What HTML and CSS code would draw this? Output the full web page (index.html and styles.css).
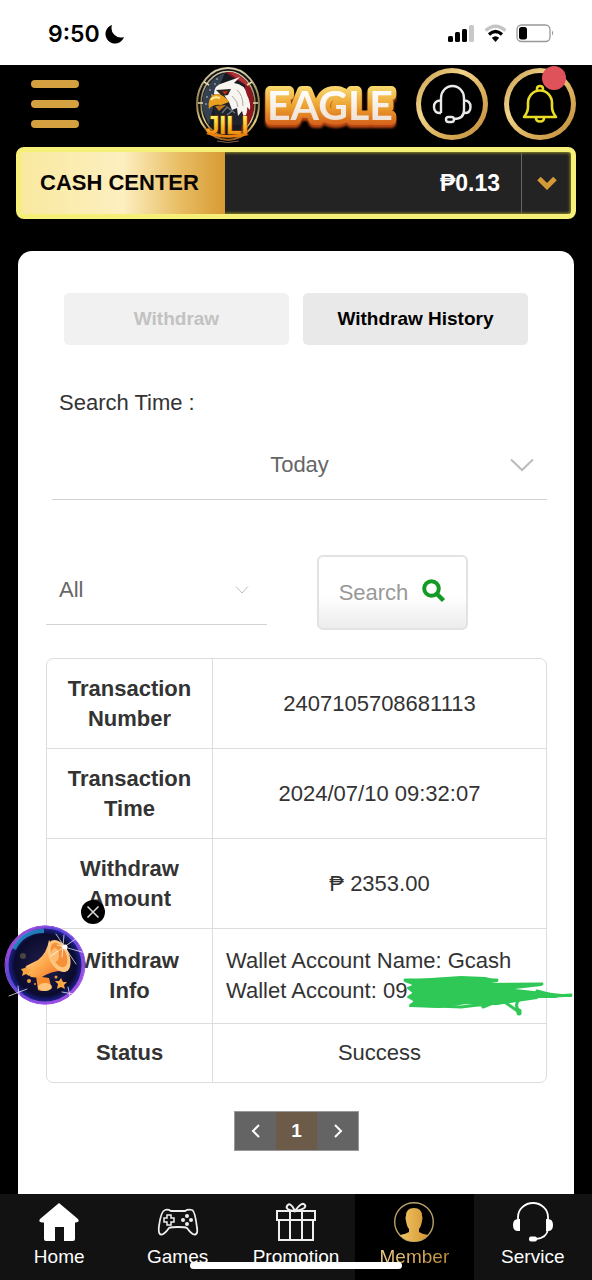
FILE: index.html
```html
<!DOCTYPE html>
<html lang="en">
<head>
<meta charset="utf-8">
<meta name="viewport" content="width=device-width, initial-scale=1">
<title>Withdraw History</title>
<link rel="stylesheet" href="styles.css">
</head>
<body>
<div class="status">
  <span class="status-time">9:50</span>
  <svg class="status-moon" width="20" height="20" viewBox="0 0 20 20"><path d="M7 1A9.500 9.500 0 1 0 19 13A9.500 9.500 0 0 1 7 1Z" fill="#000"/></svg>
  <svg class="status-icons" width="108" height="20" viewBox="0 0 108 20">
    <rect x="1" y="12" width="5" height="6" rx="1.500"/><rect x="8" y="8" width="5" height="10" rx="1.500"/><rect x="15" y="5" width="5" height="13" rx="1.500"/><rect x="22" y="1" width="5" height="17" rx="1.500" fill="#c8c8c8"/>
    <g fill="none" stroke-width="3.200"><path d="M38.500 6.500Q48.500-2 58.500 6.500" stroke="#c4c4c4"/><path d="M42 10.500Q48.500 4.500 55 10.500" stroke="#000"/></g>
    <path d="M48.500 18L44.800 13.800Q48.500 10.800 52.200 13.800Z"/>
    <rect x="70" y="1" width="33" height="16.500" rx="4.500" fill="none" stroke="#999" stroke-width="1.300"/><rect x="72" y="3" width="8" height="12.500" rx="2.500"/><path d="M105 6.500q2.500 2.500 0 5z" fill="#999"/>
  </svg>
</div>

<header class="top">
  <button class="menu" aria-label="Menu"><span></span><span></span><span></span></button>
  <a class="logo" href="#" aria-label="Jili Eagle">
    <svg width="202" height="82" viewBox="0 0 202 82">
      <defs>
        <linearGradient id="ring" x1="0" y1="0" x2="0" y2="1"><stop offset="0" stop-color="#d9cfae"/><stop offset=".5" stop-color="#8c7947"/><stop offset=".75" stop-color="#e8d089"/><stop offset="1" stop-color="#9a5a1a"/></linearGradient>
        <linearGradient id="flame" x1="0" y1="0" x2="0" y2="1"><stop offset=".2" stop-color="#fff15a"/><stop offset=".6" stop-color="#f8b41d"/><stop offset="1" stop-color="#e46c0c"/></linearGradient>
        <linearGradient id="edge" x1="0" y1="0" x2="0" y2="1"><stop offset=".1" stop-color="#f8dd73"/><stop offset=".55" stop-color="#ec9f2d"/><stop offset="1" stop-color="#cf5216"/></linearGradient>
        <linearGradient id="face" x1="0" y1="0" x2="0" y2="1"><stop offset=".2" stop-color="#fff"/><stop offset="1" stop-color="#ecd8c9"/></linearGradient>
        <clipPath id="disc"><ellipse cx="33" cy="39" rx="26" ry="32"/></clipPath>
      </defs>
      <ellipse cx="33" cy="39" rx="31" ry="36" fill="#111" stroke="url(#ring)" stroke-width="2"/>
      <ellipse cx="33" cy="39" rx="27" ry="32.500" fill="#161a20" stroke="url(#ring)" stroke-width="1.500"/>
      <g clip-path="url(#disc)">
        <path d="M28 6Q65 4 60 54L46 66L50 20Z" fill="#8e1621"/>
        <path d="M33 6Q50 8 57 24L44 15Z" fill="#b03338"/>
        <path d="M7 44Q6 16 30 8L22 26L14 60Z" fill="#35404f"/>
        <g fill="#8b97a6"><circle cx="15" cy="25" r="1"/><circle cx="20" cy="19" r="1"/><circle cx="12" cy="32" r="1"/><circle cx="17" cy="30" r="1"/><circle cx="22" cy="14" r="1"/><circle cx="11" cy="39" r="1"/></g>
        <path d="M18 42L34 36L46 40L48 60H22Z" fill="#20242a"/>
        <path d="M19 29Q19 20 28 18L45 12L39 18Q50 19 52 30Q56 38 55 45L52 42Q53 48 49 53L47 46L43 51L42 43L37 45L34 37L29 30Z" fill="#f8f5f1"/>
        <path d="M42 25Q48 30 48 41M37 31Q43 36 43 42" fill="none" stroke="#a9a6a3" stroke-width="1"/>
        <path d="M21 25L36 24L33 30L27 31Z" fill="#2a2523"/>
        <path d="M27 26.500L33 26L30 29.500Z" fill="#d32818"/>
        <path d="M14 44Q12 32 20 29Q28 28 34 37L26 40Q18 39 14 44Z" fill="#eaa01e"/>
        <path d="M16 35Q19 31 25 33" fill="none" stroke="#fff0a1" stroke-width="2"/>
        <path d="M20 41L31 40L24 46Z" fill="#c47618"/>
        <path d="M27 48L32 42L40 48M32 50L37 46" fill="none" stroke="#68717a" stroke-width="1.500"/>
      </g>
      <path d="M3 38h5M58 38h5M9 17l5 3M57 17l-5 3" stroke="#e8dab1" stroke-width="1.500"/>
      <text class="logo-jili" x="32" y="69" text-anchor="middle">JILI</text>
      <path d="M11 69q3-3 6-1q14 4 32 0l5 2q-21 6-43-1Z" fill="#e8800f"/>
      <path d="M22 76q10 3 22 0" fill="none" stroke="#7d6352" stroke-width="1"/>
      <text class="logo-eagle" x="72" y="55">EAGLE</text>
    </svg>
  </a>
  <button class="round" aria-label="Customer service">
    <svg width="40" height="40" viewBox="0 0 40 40" fill="none" stroke="#e9e9e9" stroke-width="2.400"><path d="M9 29V14A11.500 12 0 0 1 32 14V26Q32 35 22 35"/><path d="M9 16.500Q2 16.500 2 23T9 29M32 16.500Q38.500 16.500 38.500 23T32 29"/><rect x="14" y="33" width="8" height="5" rx="2.500"/></svg>
  </button>
  <button class="round" aria-label="Notifications">
    <svg width="40" height="40" viewBox="0 0 40 40" fill="none" stroke="#e9dc24" stroke-width="2.600" stroke-linejoin="round"><path d="M17 6.500V5Q17 2 20 2T23 5V6.500"/><path d="M4 33Q8 28 8 23V19A12 12.500 0 0 1 32 19V23Q32 28 36 33Z"/><path d="M16 34Q16 37.500 20 37.500T24 34"/></svg>
    <span class="dot"></span>
  </button>
</header>

<section class="cash">
  <h1 class="cash-title">CASH CENTER</h1>
  <span class="cash-sum">₱0.13</span>
  <button class="cash-more" aria-label="Show balances"><svg width="20" height="14" viewBox="0 0 20 14"><path d="M2 2.500L10 10.500L18 2.500" fill="none" stroke="#d49a38" stroke-width="5"/></svg></button>
</section>

<main class="card">
  <div class="tabs">
    <button class="tab">Withdraw</button>
    <button class="tab tab-on">Withdraw History</button>
  </div>
  <label class="time-label" for="time">Search Time :</label>
  <div class="pick pick-time">
    <select id="time"><option>Today</option></select>
    <svg class="pick-arrow" width="24" height="14" viewBox="0 0 24 14"><path d="M1 1.500L12 12L23 1.500"/></svg>
  </div>
  <div class="filter">
    <div class="pick pick-type">
      <select aria-label="Status filter"><option>All</option></select>
      <svg class="pick-arrow" width="14" height="9" viewBox="0 0 14 9"><path d="M1 1L7 7.500L13 1"/></svg>
    </div>
    <button class="search">Search
      <svg width="24" height="28" viewBox="0 0 24 28" fill="none" stroke="#129a24"><circle cx="9.500" cy="9.500" r="7.300" stroke-width="4"/><path d="M15 15L21.500 21.500" stroke-width="4.500"/></svg>
    </button>
  </div>

  <table class="record">
    <tr><th scope="row">Transaction Number</th><td>2407105708681113</td></tr>
    <tr><th scope="row">Transaction Time</th><td>2024/07/10 09:32:07</td></tr>
    <tr><th scope="row">Withdraw Amount</th><td>₱ 2353.00</td></tr>
    <tr class="row-info"><th scope="row">Withdraw Info</th><td>Wallet Account Name: Gcash<br>Wallet Account: 09
      <svg class="scribble" width="172" height="44" viewBox="0 0 172 44" fill="none" stroke="#2fc857" stroke-linecap="round" stroke-linejoin="round"><path d="M4 6L30 4L60 2L84 3L96 6L78 9L140 10L105 14L170 21L138 20L155 22L118 22L136 23L96 29L80 29L65 28L38 32L9 31L14 26L7 22L13 18L7 13L15 10Z" fill="#2fc857" stroke-width="2"/><path d="M4 5L96 5M12 10L141 9M10 30L60 32L112 26M82 32L92 28L118 25Q113 30 118 36M105 28L118 37M136 16L155 21L170 20" stroke-width="3"/><path d="M118 36v2" stroke-width="5"/></svg>
    </td></tr>
    <tr class="row-status"><th scope="row">Status</th><td>Success</td></tr>
  </table>

  <nav class="pages" aria-label="Pages">
    <button aria-label="Previous page"><svg width="10" height="14" viewBox="0 0 10 14"><path d="M8 1L2 7L8 13"/></svg></button>
    <button class="page-on" aria-current="page">1</button>
    <button aria-label="Next page"><svg width="10" height="14" viewBox="0 0 10 14"><path d="M2 1L8 7L2 13"/></svg></button>
  </nav>
</main>

<nav class="tabbar" aria-label="Main">
  <a href="#"><svg width="42" height="42" viewBox="0 0 42 42"><path d="M21 2L40 18Q42 21 38 21.500H37V38Q37 40 35 40H26V26H17V40H8Q6 40 6 38V21.500H4Q0 21 2 18Z" fill="#fff"/></svg>Home</a>
  <a href="#"><svg width="42" height="42" viewBox="0 0 42 42" fill="none" stroke="#eee" stroke-width="1.800"><path d="M8 9Q11 8 14 10H28Q31 8 35 9Q38 10 40 27Q41 33 38 33.500Q35 34 30 27Q28 26 21 26T12 27Q7 34 4 33.500Q1 33 2 25Q4 10 8 9Z"/><path d="M10 14h4v3h3v4h-3v3h-4v-3H7v-4h3Z" stroke-width="1.500"/><g fill="#eee" stroke="none"><circle cx="30" cy="15" r="2"/><circle cx="30" cy="23" r="2"/><circle cx="26" cy="19" r="2"/><circle cx="34" cy="19" r="2"/></g></svg>Games</a>
  <a href="#"><svg width="42" height="42" viewBox="0 0 42 42" fill="none" stroke="#eee" stroke-width="2"><path d="M2 10H40V19H2ZM4 19V39H38V19M15 10V39M27 10V39"/><path d="M20 10Q10 9 12 5Q15 0 20 10Q27 0 30 4Q32 8 20 10"/></svg>Promotion</a>
  <a href="#" class="here" aria-current="page"><svg width="42" height="42" viewBox="0 0 42 42"><defs><linearGradient id="gold"><stop offset="0" stop-color="#f0c565"/><stop offset="1" stop-color="#d39733"/></linearGradient></defs><circle cx="21" cy="21" r="19.300" fill="none" stroke="#b9a269" stroke-width="1.400"/><path d="M21 7Q29 7 29 15Q30 16 29 20Q28 26 26 28V31Q29 33 35 34Q29 40.500 21 40.500T7 34Q13 33 16 31V28Q14 26 13 20Q12 16 13 15Q13 7 21 7Z" fill="url(#gold)"/></svg><span>Member</span></a>
  <a href="#"><svg width="42" height="42" viewBox="0 0 42 42" fill="none" stroke="#fff" stroke-width="1.800"><path d="M6 18V16A15 14 0 0 1 36 16V28Q35 37 24 38"/><path d="M8 18V30H6Q1 30 1 24T6 18ZM34 18V30H36Q41 30 41 24T36 18Z" fill="#fff" stroke="none"/><rect x="17" y="35.500" width="8" height="5" rx="2" fill="#fff" stroke="none"/></svg>Service</a>
  <span class="home-bar"></span>
</nav>

<aside class="promo">
  <button class="promo-open" aria-label="Announcements">
    <svg width="90" height="90" viewBox="0 0 90 90">
      <defs>
        <radialGradient id="night"><stop offset="0" stop-color="#21204c"/><stop offset=".8" stop-color="#0b0b2e"/><stop offset="1" stop-color="#2026a0"/></radialGradient>
        <linearGradient id="rim" x1="0" y1="0" x2="1" y2="1"><stop offset="0" stop-color="#d64ad2"/><stop offset=".35" stop-color="#5148d8"/><stop offset="1" stop-color="#b750e4"/></linearGradient>
        <linearGradient id="horn" x1="0" y1="0" x2="1" y2="1"><stop offset="0" stop-color="#ffe5bd"/><stop offset=".5" stop-color="#ffac50"/><stop offset="1" stop-color="#ed6519"/></linearGradient>
      </defs>
      <circle cx="45" cy="45" r="38" fill="url(#night)" stroke="url(#rim)" stroke-width="3"/>
      <ellipse cx="45" cy="45" rx="40" ry="39" fill="none" stroke="#9a52ec" stroke-width="1"/>
      <path d="M14 29Q23 11 44 11" fill="none" stroke="#27a6d8" stroke-width="4" opacity=".7"/>
      <path d="M36 56L49 58L51 66Q46 73 38 70Z" fill="#f68d2c"/><ellipse cx="45" cy="67" rx="7" ry="4" fill="#ffc37a"/>
      <path d="M26 46L38 40Q47 33 49 20L68 51Q54 49 40 58L31 57Q24 52 26 46Z" fill="url(#horn)"/>
      <ellipse cx="59" cy="36" rx="10" ry="17" transform="rotate(-25 59 36)" fill="#ffc67e"/><ellipse cx="59" cy="35" rx="7" ry="13" transform="rotate(-25 59 35)" fill="#f39039"/><ellipse cx="55" cy="35" rx="4" ry="7" fill="#ffbd72"/>
      <path d="M27 46l1 3 4 1-3 2 0 4-3-2-4 2 1-4-2-3 4-1ZM61 58l2 4 4 0-3 3 1 4-4-2-4 2 1-5-3-3 4 0Z" fill="#f9a740"/>
      <g stroke="#fff" stroke-linecap="round" opacity=".7"><path d="M56 14L76 44M51 36L77 18M64 15L62 37M57 25L82 32M9 76L27 69M18 66L20 82M68 67L71 81M62 72L79 75" stroke-width="1"/></g>
      <circle cx="65" cy="27" r="2.500" fill="#fff"/><g fill="#ef9b3b"><circle cx="29" cy="61" r="2"/><circle cx="56" cy="57" r="1.500"/><circle cx="35" cy="64" r="1"/></g><circle cx="23" cy="36" r="3" fill="#4b4440"/>
    </svg>
  </button>
  <button class="promo-close" aria-label="Close"><svg width="24" height="24" viewBox="0 0 24 24"><circle cx="12" cy="12" r="12"/><path d="M6.500 6.500L17.500 17.500M17.500 6.500L6.500 17.500" stroke="#ddd" stroke-width="1.500"/></svg></button>
</aside>
</body>
</html>
```

FILE: styles.css
```css
* { box-sizing: border-box; }
body {
  position: relative;
  display: flex;
  flex-direction: column;
  min-height: 100vh;
  margin: 0;
  background: #000;
  color: #333;
  font: 22px/30px "Liberation Sans", Arial, sans-serif;
}
button, select { font: inherit; color: inherit; border: 0; padding: 0; margin: 0; background: none; }
svg { display: block; flex: none; }
a { color: inherit; text-decoration: none; }

.status {
  display: flex;
  align-items: center;
  height: 65px;
  padding: 3px 37px 0 48px;
  background: #fff;
  color: #000;
}
.status-time { font: 600 23px/30px Inter, sans-serif; }
.status-moon { margin-left: 5px; }
.status-icons { margin-left: auto; }

.top { display: flex; align-items: center; height: 82px; padding: 0 16px 4px 31px; }
.menu { display: flex; flex-direction: column; gap: 12px; width: 48px; }
.menu span { height: 8px; border-radius: 4px; background: #d5a03f; }
.logo { margin: 4px 19px 0 auto; }
.logo-jili { font: 700 25px "Liberation Sans", sans-serif; fill: url(#flame); stroke: #8a3c05; stroke-width: 1; paint-order: stroke; }
.logo-eagle { font: 700 41px Lato, sans-serif; fill: url(#face); stroke: url(#edge); stroke-width: 10; stroke-linejoin: round; paint-order: stroke; filter: drop-shadow(0 3px 1px #b94713); }
.round {
  position: relative;
  display: grid;
  place-items: center;
  width: 72px;
  height: 72px;
  border: 5px solid transparent;
  border-radius: 50%;
  background: linear-gradient(#000, #000) padding-box, linear-gradient(135deg, #c69546, #f1d48b 35%, #d9ad59 65%, #c08a3b) border-box;
}
.round + .round { margin-left: 16px; }
.dot { position: absolute; top: -7px; right: 5px; width: 24px; height: 24px; border-radius: 50%; background: #e0525a; }

.cash {
  display: flex;
  height: 72px;
  margin: 0 16px;
  border: 5px solid #f6ef78;
  border-radius: 8px;
  background: #232323;
  box-shadow: inset 0 0 3px 1px #8f8a2e;
}
.cash-title {
  display: flex;
  align-items: center;
  margin: 0;
  padding: 0 26px 0 19px;
  background: linear-gradient(90deg, #f9e9a0, #fdefc0 50%, #e8bd63 78%, #d89a34);
  color: #0a0606;
  font-size: 22px;
}
.cash-sum { flex: 1; padding-right: 21px; align-self: center; text-align: right; color: #fff; font-size: 23px; font-weight: 700; }
.cash-more { display: grid; place-items: center; width: 50px; border-left: 1px solid #666; }

.card {
  flex: 1;
  margin: 32px 18px 0;
  padding: 42px 27px 42px 28px;
  border-radius: 14px 14px 0 0;
  background: #fff;
}
.tabs { display: grid; grid-template-columns: 1fr 1fr; gap: 14px; margin: 0 19px 0 18px; }
.tab { height: 52px; border-radius: 5px; background: #f1f1f1; color: #c2c2c2; font-size: 19px; font-weight: 700; }
.tab-on { background: #e9e9e9; color: #000; }
.time-label { display: block; margin: 43px 13px 0; }
.pick { position: relative; border-bottom: 1px solid #d2d2d2; color: #666; }
.pick select { display: block; width: 100%; height: 69px; appearance: none; }
.pick-time { margin: 12px 0 0 6px; }
.pick-time select { text-align: center; text-align-last: center; }
.pick-arrow { position: absolute; right: 13px; top: 50%; translate: 0 -50%; fill: none; stroke: #bbb; stroke-width: 2; pointer-events: none; }
.filter { display: flex; align-items: flex-start; gap: 50px; margin-top: 55px; }
.pick-type { width: 221px; }
.pick-type select { padding-left: 13px; }
.pick-type .pick-arrow { right: 18px; stroke-width: 1; }
.search {
  display: flex;
  align-items: center;
  justify-content: center;
  gap: 14px;
  width: 151px;
  height: 75px;
  border: 2px solid #e2e2e2;
  border-radius: 6px;
  background: linear-gradient(#fff 55%, #ececec);
  color: #999;
}

.record {
  width: 100%;
  margin-top: 28px;
  border: 1px solid #ddd;
  border-radius: 7px;
  border-spacing: 0;
  table-layout: fixed;
}
.record th, .record td { height: 90px; padding: 0 13px; text-align: center; }
.record th { width: 166px; border-right: 1px solid #ddd; }
.record tr:first-child > * { height: 89px; }
.record tr + tr > * { border-top: 1px solid #ddd; }
.record .row-info > * { height: 95px; }
.record .row-info td { position: relative; text-align: left; }
.record .row-status > * { height: 59px; }
.scribble { position: absolute; left: 188px; top: 46px; }

.pages { display: flex; width: max-content; margin: 28px auto 0; border: 1px solid #999; background: #646464; color: #fff; }
.pages button { display: grid; place-items: center; width: 41px; height: 38px; font-size: 19px; font-weight: 700; }
.pages svg { fill: none; stroke: #fff; stroke-width: 2; }
.pages .page-on { background: #6c5b49; }

.tabbar { position: relative; display: grid; grid-template-columns: repeat(5, 1fr); height: 86px; background: #121212; color: #fff; font-size: 19px; line-height: 24px; }
.tabbar a { display: flex; flex-direction: column; align-items: center; gap: 2px; padding-top: 7px; }
.tabbar .here { background: #000; }
.here span { background: linear-gradient(90deg, #f0cf86, #bd8a3c); background-clip: text; color: transparent; }
.home-bar { position: absolute; left: 50%; bottom: 11px; width: 212px; height: 7px; border-radius: 4px; background: #fff; translate: -50% 0; }

.promo { position: absolute; left: 0; top: 920px; }
.promo-open { display: block; }
.promo-close { position: absolute; left: 81px; top: -20px; }
```
